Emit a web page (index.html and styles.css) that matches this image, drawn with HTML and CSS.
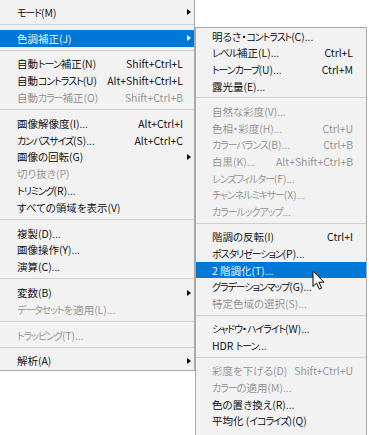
FILE: index.html
```html
<!DOCTYPE html>
<html>
<head>
  <meta charset="UTF-8">
  <title>イメージ - 色調補正</title>
  <link rel="stylesheet" href="styles.css">
</head>
<body>
  <div class="stage">

    <div class="menu main">
      <div class="item"><span><b class="k">モード</b>(M)</span><span></span><i class="arrow"></i></div>
      <div class="sep"></div>
      <div class="item active"><span>色調補正(J)</span><span></span><i class="arrow"></i></div>
      <div class="sep"></div>
      <div class="item"><span>自動<b class="k">トーン</b>補正(N)</span><span class="key">Shift+Ctrl+L</span><i></i></div>
      <div class="item"><span>自動<b class="k">コントラスト</b>(U)</span><span class="key">Alt+Shift+Ctrl+L</span><i></i></div>
      <div class="item off"><span>自動<b class="k">カラー</b>補正(O)</span><span class="key">Shift+Ctrl+B</span><i></i></div>
      <div class="sep"></div>
      <div class="item"><span>画像解像度(I)...</span><span class="key">Alt+Ctrl+I</span><i></i></div>
      <div class="item"><span><b class="k">カンバスサイズ</b>(S)...</span><span class="key">Alt+Ctrl+C</span><i></i></div>
      <div class="item"><span>画像の回転(G)</span><span></span><i class="arrow"></i></div>
      <div class="item off"><span>切り抜き(P)</span><span></span><i></i></div>
      <div class="item"><span><b class="k">トリミング</b>(R)...</span><span></span><i></i></div>
      <div class="item"><span>すべての領域を表示(V)</span><span></span><i></i></div>
      <div class="sep"></div>
      <div class="item"><span>複製(D)...</span><span></span><i></i></div>
      <div class="item"><span>画像操作(Y)...</span><span></span><i></i></div>
      <div class="item"><span>演算(C)...</span><span></span><i></i></div>
      <div class="sep"></div>
      <div class="item"><span>変数(B)</span><span></span><i class="arrow"></i></div>
      <div class="item off"><span><b class="k">データセット</b>を適用(L)...</span><span></span><i></i></div>
      <div class="sep"></div>
      <div class="item off"><span><b class="k">トラッピング</b>(T)...</span><span></span><i></i></div>
      <div class="sep"></div>
      <div class="item"><span>解析(A)</span><span></span><i class="arrow"></i></div>
    </div>

    <!-- 色調補正 submenu -->
    <div class="menu sub">
      <div class="item"><span>明るさ・<b class="k">コントラスト</b>(C)...</span><span></span><i></i></div>
      <div class="item"><span><b class="k">レベル</b>補正(L)...</span><span class="key">Ctrl+L</span><i></i></div>
      <div class="item"><span><b class="k">トーンカーブ</b>(U)...</span><span class="key">Ctrl+M</span><i></i></div>
      <div class="item"><span>露光量(E)...</span><span></span><i></i></div>
      <div class="sep"></div>
      <div class="item off"><span>自然な彩度(V)...</span><span></span><i></i></div>
      <div class="item off"><span>色相・彩度(H)...</span><span class="key">Ctrl+U</span><i></i></div>
      <div class="item off"><span><b class="k">カラーバランス</b>(B)...</span><span class="key">Ctrl+B</span><i></i></div>
      <div class="item off"><span>白黒(K)...</span><span class="key">Alt+Shift+Ctrl+B</span><i></i></div>
      <div class="item off"><span><b class="k">レンズフィルター</b>(F)...</span><span></span><i></i></div>
      <div class="item off"><span><b class="k">チャンネルミキサー</b>(X)...</span><span></span><i></i></div>
      <div class="item off"><span><b class="k">カラールックアップ</b>...</span><span></span><i></i></div>
      <div class="sep"></div>
      <div class="item"><span>階調の反転(I)</span><span class="key">Ctrl+I</span><i></i></div>
      <div class="item"><span><b class="k">ポスタリゼーション</b>(P)...</span><span></span><i></i></div>
      <div class="item active"><span>2 階調化(T)...</span><span></span><i></i></div>
      <div class="item"><span><b class="k">グラデーションマップ</b>(G)...</span><span></span><i></i></div>
      <div class="item off"><span>特定色域の選択(S)...</span><span></span><i></i></div>
      <div class="sep"></div>
      <div class="item"><span><b class="k">シャドウ</b>・<b class="k">ハイライト</b>(W)...</span><span></span><i></i></div>
      <div class="item"><span>HDR <b class="k">トーン</b>...</span><span></span><i></i></div>
      <div class="sep"></div>
      <div class="item off"><span>彩度を下げる(D)</span><span class="key">Shift+Ctrl+U</span><i></i></div>
      <div class="item off"><span><b class="k">カラー</b>の適用(M)...</span><span></span><i></i></div>
      <div class="item"><span>色の置き換え(R)...</span><span></span><i></i></div>
      <div class="item"><span>平均化 (<b class="k">イコライズ</b>)(Q)</span><span></span><i></i></div>
    </div>

    <svg class="cursor" width="14" height="21" viewBox="0 0 14 21">
      <polygon points="1,1 1,16.5 4.6,13 7.3,19.2 9.6,18.2 7,12.2 12,12.2" fill="#fff" stroke="#000" stroke-width="1" stroke-linejoin="round"/>
    </svg>

  </div>
</body>
</html>
```

FILE: styles.css
```css
body {
  margin: 0;
  background-color: #fff;
  font-family: "Noto Sans CJK JP", "Noto Sans", sans-serif;
  font-size: 10.5px;
  font-weight: 350;
  font-feature-settings: "palt" 1;
  color: #000;
}

.stage {
  position: relative;
  width: 369px;
  height: 435px;
  overflow: hidden;
}

.menu {
  background-color: #f2f2f2;
}

.main {
  width: 194px;
  padding: 4px 0 1px 0;
  border-right: 1px solid #a9a9a9;
  border-bottom: 1px solid #a9a9a9;
}

/* submenu pops out over the page */
.sub {
  position: absolute;
  left: 195px;
  top: 27px;
  width: 170px;
  padding: 0 0 6px 0;
  border: 1px solid #a9a9a9;
}

.item {
  display: grid;
  grid-template-columns: 1fr auto 4px;
  column-gap: 4px;
  align-items: center;
  height: 16.8px;
  padding: 0 3px 0 17px;
  white-space: nowrap;
}

/* katakana runs: the UI font sets them much narrower */
.k {
  font-weight: inherit;
  font-size: 10px;
  letter-spacing: -1.1px;
}

.sub .item {
  height: 16.6px;
  padding: 0 5px 0 16px;
}

.item.off {
  color: #8e8e8e;
}

.item.active {
  background-color: #0078d7;
  color: #fff;
}

.key {
  text-align: right;
}

.arrow {
  width: 0;
  height: 0;
  border-left: 4px solid #000;
  border-top: 3.5px solid transparent;
  border-bottom: 3.5px solid transparent;
}

.active .arrow {
  border-left-color: #fff;
}

.sep {
  margin: 3px 0 5px 0;
  border-top: 1px solid #cfcfcf;
}

.cursor {
  position: absolute;
  left: 312px;
  top: 270px;
}
```
